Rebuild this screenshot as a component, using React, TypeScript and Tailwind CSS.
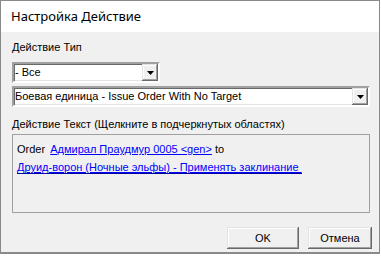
import React from "react";

const sunken =
  "border-2 border-t-[#a0a0a0] border-l-[#a0a0a0] border-b-white border-r-white shadow-[inset_1px_1px_0_#696969,inset_-1px_-1px_0_#e3e3e3]";
const raised =
  "shadow-[inset_-1px_-1px_0_#696969,inset_1px_1px_0_#e3e3e3,inset_-2px_-2px_0_#a0a0a0,inset_2px_2px_0_#ffffff]";

const ComboBox = ({ value, width }: { value: string; width: string }) => (
  <div className={`${width} h-[21px] bg-white ${sunken} flex items-stretch`}>
    <div className="flex-1 pl-[1px] flex items-center text-[11px] leading-none text-black truncate">
      {value}
    </div>
    <div className={`w-[16px] bg-[#f0f0f0] ${raised} flex items-center justify-center`}>
      <svg width="7" height="4" viewBox="0 0 7 4">
        <polygon points="0,0 7,0 3.5,4" fill="#000" />
      </svg>
    </div>
  </div>
);

const Button = ({ label, width }: { label: string; width: string }) => (
  <button
    className={`${width} h-[22px] bg-[#f0f0f0] ${raised} text-[11px] text-black leading-none`}
  >
    {label}
  </button>
);

export default function App() {
  return (
    <div className="w-[381px] h-[256px] bg-white" style={{ fontFamily: '"Liberation Sans", Arial, sans-serif' }}>
      <div className="w-[380px] h-[254px] border border-[#8a8a8a] border-b-2 flex flex-col bg-[#f0f0f0]">
        {/* Title bar */}
        <div
          className="h-[31px] bg-white flex items-center pl-[10px] text-[13px] text-black shrink-0"
          style={{ fontFamily: '"Noto Sans", "Liberation Sans", sans-serif' }}
        >
          Настройка Действие
        </div>

        {/* Body */}
        <div className="flex-1 flex flex-col px-[11px]">
          <div className="mt-[9px] h-[13px] text-[11px] leading-[13px] text-black">Действие Тип</div>
          <div className="mt-[8px]">
            <ComboBox value="- Все" width="w-[148px]" />
          </div>
          <div className="mt-[3px]">
            <ComboBox value="Боевая единица - Issue Order With No Target" width="w-[358px]" />
          </div>
          <div className="mt-[11px] h-[13px] text-[11px] leading-[13px] text-black">
            Действие Текст (Щелкните в подчеркнутых областях)
          </div>
          <div className="mt-[3px] w-[358px] h-[79px] border border-[#a0a0a0] pl-[4px] pt-[5px] text-[11px] leading-[18px] text-black">
            <div>
              Order{" "}
              <span className="ml-[2px] text-[#0000ff] underline">Адмирал Праудмур 0005 &lt;gen&gt;</span> to
            </div>
            <div>
              <span className="text-[#0000ff] underline border-b border-[#0000a0]">
                Друид-ворон (Ночные эльфы) - Применять заклинание&nbsp;
              </span>
            </div>
          </div>
          <div className="mt-auto mb-[3px] w-[360px] flex justify-end gap-[9px]">
            <Button label="OK" width="w-[72px]" />
            <Button label="Отмена" width="w-[64px]" />
          </div>
        </div>
      </div>
    </div>
  );
}
